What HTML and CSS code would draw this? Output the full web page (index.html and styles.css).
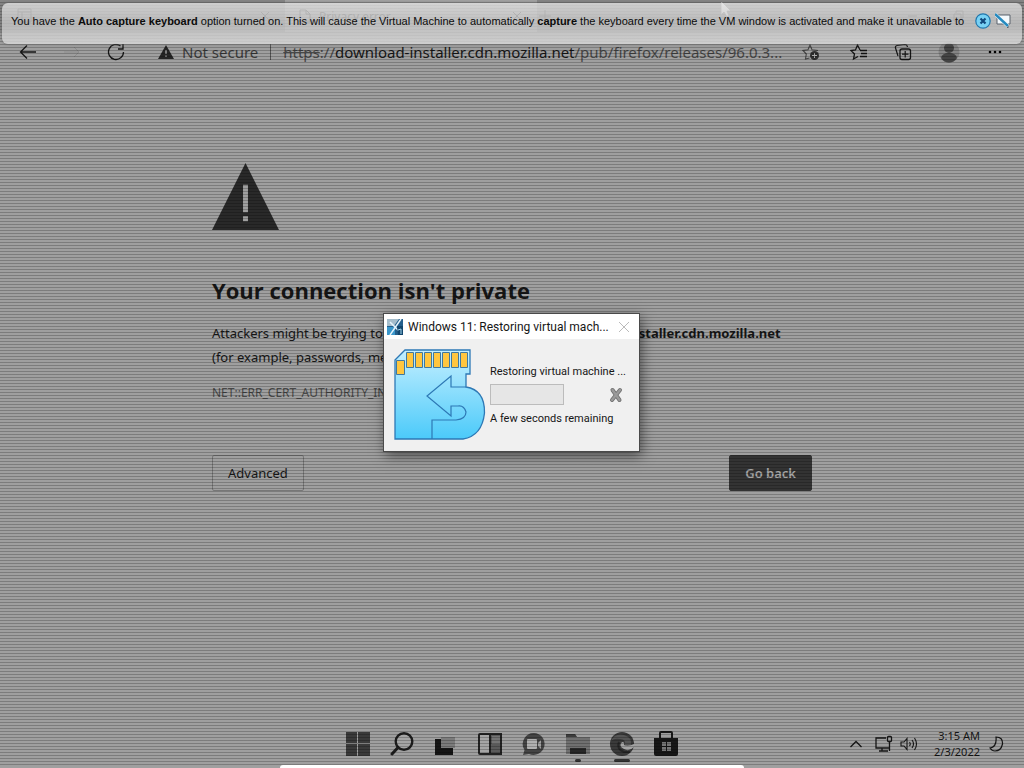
FILE: index.html
```html
<!DOCTYPE html>
<html lang="en">
<head>
<meta charset="utf-8">
<title>Windows 11 virtual machine</title>
<link rel="stylesheet" href="styles.css">
</head>
<body>
<div class="desktop">
  <div class="tabstrip">
    <svg class="tab-menu" width="16" height="16" viewBox="0 0 16 16"><path d="M1 1h13v13H1zM1 4h13M5 4v10" fill="none" stroke="currentColor"/></svg>
    <div class="tab">
      <svg class="tab-x" width="8" height="8" viewBox="0 0 8 8"><path d="M0 0l8 8M8 0L0 8" stroke="currentColor"/></svg>
    </div>
    <div class="tab tab-active">
      <svg width="12" height="14" viewBox="0 0 12 14"><path d="M1 1h6l4 4v8H1zM7 1v4h4" fill="none" stroke="currentColor"/></svg>
      <span>Privacy error</span>
      <svg class="tab-x" width="8" height="8" viewBox="0 0 8 8"><path d="M0 0l8 8M8 0L0 8" stroke="currentColor"/></svg>
    </div>
    <svg class="tab-plus" width="12" height="12" viewBox="0 0 12 12"><path d="M6 0v12M0 6h12" stroke="currentColor"/></svg>
    <svg class="window-buttons" width="56" height="12" viewBox="0 0 56 12"><path d="M0 6h9M46 4h7v7h-7zM48 3V1h7v7h-2" fill="none" stroke="currentColor"/></svg>
  </div>
  <nav class="toolbar">
    <button class="tool" aria-label="Back"><svg width="18" height="16" viewBox="0 0 18 16"><path d="M17 8H2M8 1.500L1.500 8L8 14.500" fill="none" stroke="currentColor" stroke-width="1.300"/></svg></button>
    <button class="tool faded" aria-label="Forward"><svg width="16" height="16" viewBox="0 0 16 16"><path d="M0 8h15M10 3l5 5l-5 5" fill="none" stroke="currentColor"/></svg></button>
    <button class="tool" aria-label="Refresh"><svg width="18" height="18" viewBox="0 0 18 18"><path d="M16.500 9A7.500 7.500 0 1 1 13.500 3M16 1v5h-5" fill="none" stroke="currentColor" stroke-width="1.300"/></svg></button>
    <div class="address">
      <svg width="16" height="14" viewBox="0 0 16 14"><path d="M8 0L16 14H0z" fill="#252525"/><path d="M8 5v4M8 10.500v1.500" stroke="#999" stroke-width="1.500"/></svg>
      <span class="secure">Not secure</span><span class="rule"></span>
      <span class="url"><s>https</s>://<b>download-installer.cdn.mozilla.net</b>/pub/firefox/releases/96.0.3...</span>
      <svg class="add-fav" width="18" height="18" viewBox="0 0 18 18"><path d="M7.500 15l-4 1l.8-5L1 7.500l5-.7L8 2l2 4.800l6 .7" fill="none" stroke="#444" stroke-width="1.100"/><circle cx="12.500" cy="12.500" r="4.500" fill="#303030"/><path d="M12.500 10v5M10 12.500h5" stroke="#aaa"/></svg>
    </div>
    <div class="tools">
      <button class="tool" aria-label="Favorites"><svg width="18" height="18" viewBox="0 0 18 18"><path d="M10 7L7.500 2L5.500 7L1 7.500L4.500 11L3.500 16L8 13.500M10 7.500h7M11 10.500h6M10 13.500h7" fill="none" stroke="currentColor" stroke-width="1.300"/></svg></button>
      <button class="tool" aria-label="Collections"><svg width="18" height="18" viewBox="0 0 18 18"><rect x="6" y="6" width="10.500" height="10.500" rx="2" fill="none" stroke="currentColor" stroke-width="1.300"/><path d="M11.200 8v6.500M8 11.200h6.500M4 13L1.500 5Q1 3 3 2.500L11 1.500Q13 1.500 13.500 4" fill="none" stroke="currentColor" stroke-width="1.200"/></svg></button>
      <button class="tool" aria-label="Profile"><svg width="22" height="22" viewBox="0 0 22 22"><circle cx="11" cy="11" r="10.500" fill="#858585"/><circle cx="11" cy="7" r="5" fill="#444"/><path d="M3 17Q4 12 11 12T19 17Q16 21.500 11 21.500T3 17z" fill="#444"/></svg></button>
      <button class="tool" aria-label="Settings and more"><svg width="16" height="16" viewBox="0 0 16 16"><circle cx="3" cy="8" r="1.300"/><circle cx="8" cy="8" r="1.300"/><circle cx="13" cy="8" r="1.300"/></svg></button>
    </div>
  </nav>

  <main class="page">
    <article class="warning">
      <svg class="warning-icon" width="67" height="67" viewBox="0 0 68 68"><path d="M34 0L68 68H0z" fill="#292929"/><path d="M34 22v28M34 54v5" stroke="#a0a0a0" stroke-width="5"/></svg>
      <h1>Your connection isn't private</h1>
      <p class="explain">Attackers might be trying to steal your information from <strong>download-installer.cdn.mozilla.net</strong><br>(for example, passwords, messages, or credit cards).</p>
      <p class="code">NET::ERR_CERT_AUTHORITY_INVALID</p>
      <div class="actions">
        <button class="btn">Advanced</button>
        <button class="btn btn-primary">Go back</button>
      </div>
    </article>
  </main>

  <footer class="taskbar">
    <div class="apps">
      <button class="app" aria-label="Start"><svg width="24" height="24" viewBox="0 0 24 24" fill="#3a3a3a"><path d="M0 0h11v11H0zM12 0h12v11H12zM0 12h11v12H0zM12 12h12v12H12z"/></svg></button>
      <button class="app" aria-label="Search"><svg width="24" height="24" viewBox="0 0 24 24"><circle cx="14" cy="9.500" r="8.300" fill="#a5a5a5" stroke="#1d1d1d" stroke-width="2.400"/><path d="M8 15.500L2 22" stroke="#1d1d1d" stroke-width="3" stroke-linecap="round"/></svg></button>
      <button class="app" aria-label="Task view"><svg width="24" height="24" viewBox="0 0 24 24"><path d="M7 5h14v11H7z" fill="#7c7c7c"/><path d="M1 7h6v9h12v7H1z" fill="#151515"/></svg></button>
      <button class="app" aria-label="Widgets"><svg width="24" height="24" viewBox="0 0 24 24"><rect x="1" y="2" width="22" height="20" rx="1" fill="#a5a5a5" stroke="#222" stroke-width="2"/><path d="M12 2h11v20H12z" fill="#5a5a5a" stroke="#222" stroke-width="2"/><path d="M14 4h8v8h-8z" fill="#747474"/></svg></button>
      <button class="app" aria-label="Chat"><svg width="24" height="24" viewBox="0 0 24 24"><path d="M12 1a11 11 0 1 1-5 21L1 23l1.500-5A11 11 0 0 1 12 1z" fill="#444"/><rect x="5" y="7" width="10" height="10" rx="1" fill="#b0b0b0"/><path d="M16 11l3-3v9l-3-3z" fill="#a0a0a0"/></svg></button>
      <button class="app running" aria-label="File Explorer"><svg width="24" height="24" viewBox="0 0 24 24"><path d="M0 2h9l2 3h13v17H0z" fill="#707070"/><path d="M0 2h9l2 3H0z" fill="#3c3c3c"/><path d="M4 16h16v6H4z" fill="#282828"/></svg></button>
      <button class="app running active" aria-label="Microsoft Edge"><svg width="24" height="24" viewBox="0 0 24 24"><circle cx="12" cy="12" r="12" fill="#3a3a3a"/><path d="M1 9Q5 1 14 3Q22 5 21 13Q17 17 15 13Q16 7 10 7Q4 6 1 9z" fill="#555"/><path d="M24 15Q19 20 14 17Q8 14 12 10Q15 10 14 13Q18 15 24 12z" fill="#a4a4a4"/><path d="M9 10Q6 17 14 20L20 20" fill="none" stroke="#262626" stroke-width="2"/></svg></button>
      <button class="app" aria-label="Microsoft Store"><svg width="24" height="26" viewBox="0 0 24 26"><path d="M6 8V2q0-1 1-1h10q1 0 1 1v6" fill="none" stroke="#191919" stroke-width="2"/><path d="M0 7h24v16q0 2-2 2H2q-2 0-2-2z" fill="#171717"/><path d="M8 11h4v4H8zM13 11h4v4h-4zM8 16h4v4H8zM13 16h4v4h-4z" fill="#757575"/></svg></button>
    </div>
    <div class="tray">
      <svg width="14" height="10" viewBox="0 0 14 10"><path d="M1.500 8L7 2.500L12.500 8" fill="none" stroke="currentColor" stroke-width="1.300"/></svg>
      <svg class="net" width="18" height="18" viewBox="0 0 18 18"><path d="M11 3H1v10h13M4 16h9M7 13v3M14.500 7v9" fill="none" stroke="currentColor" stroke-width="1.300"/><rect x="12.500" y="1.500" width="4" height="5" rx="1" fill="none" stroke="currentColor" stroke-width="1.300"/></svg>
      <svg class="sound" width="18" height="14" viewBox="0 0 18 14"><path d="M1 5h3l3-3.500v11L4 9H1zM9.500 5q1.500 2 0 4M12 3q3 4 0 8M14.500 1q4 6 0 12" fill="none" stroke="currentColor" stroke-width="1.100"/></svg>
      <div class="clock"><time>3:15 AM</time><time>2/3/2022</time></div>
      <svg width="15" height="16" viewBox="0 0 15 16"><path d="M7 1Q14 1 13.500 8Q12 15 6 15Q3 15 1 12Q8 11 7 1z" fill="none" stroke="currentColor" stroke-width="1.200"/></svg>
    </div>
  </footer>
  <div class="bottom-edge"></div>
</div>

<svg class="cursor" width="12" height="18" viewBox="0 0 12 18"><path d="M1 1v14l3-3l3 5l2-1l-2-5h4z" fill="#eee" stroke="#777" stroke-width=".8"/></svg>
<aside class="notice">
  <p>You have the <b>Auto capture keyboard</b> option turned on. This will cause the Virtual Machine to automatically <b>capture</b> the keyboard every time the VM window is activated and make it unavailable to</p>
  <button aria-label="Close message"><svg width="16" height="16" viewBox="0 0 16 16"><circle cx="8" cy="8" r="7.200" fill="#78d1f4" stroke="#2077ad" stroke-width="1.200"/><path d="M5.500 5.500l5 5M10.500 5.500l-5 5" stroke="#10497d" stroke-width="2.200"/></svg></button>
  <button aria-label="Do not show again"><svg width="16" height="16" viewBox="0 0 16 16"><path d="M2 2h13v9H13v4l-4-4H2z" fill="#f4f9fc" stroke="#5a626c"/><path d="M0 1l13 12" stroke="#f4f9fc" stroke-width="3.500"/><path d="M0 1l13 12" stroke="#268abf" stroke-width="2.400"/></svg></button>
</aside>

<section class="dialog" role="dialog" aria-labelledby="dialog-title">
  <header class="dialog-head">
    <svg width="16" height="16" viewBox="0 0 16 16"><path d="M0 0h16v16H0z" fill="#235f8c"/><path d="M0 0h12L7 7H0z" fill="#a5bdcb"/><path d="M0 8h8v8H0z" fill="#3a97cb"/><path d="M14 0L3 16M3 3l11 11" stroke="#e6f4fb" stroke-width="1.500"/><path d="M10 7h6v9h-5z" fill="#12466d"/><path d="M11 11l3-1v5" fill="none" stroke="#a3d7ef"/></svg>
    <h2 id="dialog-title">Windows 11: Restoring virtual mach...</h2>
    <button aria-label="Close"><svg width="12" height="12" viewBox="0 0 12 12"><path d="M1 1l10 10M11 1L1 11" stroke="#bbb"/></svg></button>
  </header>
  <div class="dialog-body">
    <svg width="92" height="92" viewBox="0 0 92 92">
      <defs><linearGradient id="card" x1="0" y1="0" x2="0" y2="1"><stop offset="0" stop-color="#c4efff"/><stop offset="1" stop-color="#4bcafa"/></linearGradient></defs>
      <path d="M1 11L11 1H76V25H72V38Q91 41 90.500 64Q88 87 69 90H1z" fill="url(#card)" stroke="#2d78b5" stroke-width="1.300"/>
      <path d="M38 90V71H62Q72 70 72 63Q70 56 64 57H57V67L33 47L57 27V38H72" fill="none" stroke="#2d78b5" stroke-width="1.200"/>
      <g fill="#ffc63f" stroke="#3f78a0"><path d="M2.500 11.500h8v14h-8zM12.500 3.500h7v15h-7zM21.500 3.500h7v15h-7zM30.500 3.500h7v15h-7zM39.500 3.500h7v15h-7zM48.500 3.500h7v15h-7zM57.500 3.500h7v15h-7zM66.500 3.500h7v15h-7z"/></g>
    </svg>
    <div class="status">
      <p>Restoring virtual machine ...</p>
      <div class="progress-row">
        <div class="progress" role="progressbar" aria-label="Restoring virtual machine"></div>
        <button aria-label="Cancel"><svg width="14" height="16" viewBox="0 0 14 16"><path d="M3.500 3l7 10M11 3L3 13" stroke="#707070" stroke-width="4" stroke-linecap="round"/><path d="M3.500 3l7 10M11 3L3 13" stroke="#9a9a9a" stroke-width="2.300" stroke-linecap="round"/></svg></button>
      </div>
      <p>A few seconds remaining</p>
    </div>
  </div>
</section>
</body>
</html>
```
FILE: styles.css
```css
* { box-sizing: border-box; }
body, h1, h2, p { margin: 0; }
body {
  position: relative;
  min-height: 100vh;
  background: #9f9f9f;
  color: #161616;
  font-family: "Noto Sans", "Open Sans", sans-serif;
}
button {
  padding: 0;
  border: 0;
  background: none;
  color: inherit;
  font: inherit;
}
svg { display: block; flex: none; }

.desktop {
  position: relative;
  display: flex;
  flex-direction: column;
  min-height: 100vh;
}
.desktop::after {
  content: "";
  position: absolute;
  inset: 0 0 3px;
  background: repeating-linear-gradient(transparent 0 2px, rgba(0, 0, 0, .22) 2px 3px);
  pointer-events: none;
}

.tabstrip {
  display: flex;
  align-items: center;
  height: 32px;
  padding-left: 17px;
  background: #858585;
  color: #333;
  font-size: 12px;
}
.tab {
  display: flex;
  align-items: center;
  gap: 8px;
  width: 252px;
  height: 32px;
  padding: 0 16px 0 14px;
}
.tab-active { background: #a2a2a2; }
.tab-x { margin-left: auto; }
.tab-plus { margin-left: 2px; }
.window-buttons { margin: 0 60px 0 auto; }

.toolbar {
  display: flex;
  align-items: center;
  height: 40px;
  padding: 0 20px 0 19px;
  gap: 26px;
}
.tool { display: grid; place-items: center; min-width: 18px; }
.faded { opacity: .12; }
.address {
  display: flex;
  flex: 1;
  align-items: center;
  min-width: 0;
  padding-left: 7px;
  font-size: 15px;
  white-space: nowrap;
}
.secure { margin-left: 8px; color: #3c3c3c; }
.rule { width: 1px; height: 16px; margin: 0 12px; background: #555; }
.url { color: #484848; }
.url b { font-weight: 400; color: #181818; }
.add-fav { margin-left: auto; }
.tools { display: flex; align-items: center; gap: 26px; padding-left: 4px; }

.page { flex: 1; padding: 91px 32px 32px; }
.warning { max-width: 600px; margin: 0 auto; }
h1 {
  margin-top: 42px;
  font: 700 22px/36px "Open Sans", "Noto Sans", sans-serif;
}
.explain { margin-top: 13px; font-size: 13px; line-height: 24px; white-space: nowrap; }
.code { margin-top: 12px; font-size: 12px; line-height: 24px; color: #484848; }
.actions { display: flex; justify-content: space-between; margin-top: 50px; }
.btn {
  height: 36px;
  padding: 0 15px;
  border: 1px solid #777;
  border-radius: 2px;
  font-size: 13px;
}
.btn-primary {
  border-color: #333;
  background: #333;
  color: #a5a5a5;
  font-weight: 600;
}

.taskbar {
  display: grid;
  grid-template-columns: 1fr auto 1fr;
  align-items: center;
  height: 43px;
}
.apps { grid-column: 2; display: flex; gap: 20px; }
.app { position: relative; display: grid; place-items: center; width: 24px; height: 32px; }
.running::after {
  content: "";
  position: absolute;
  bottom: -2px;
  left: 9px;
  width: 6px;
  height: 3px;
  border-radius: 2px;
  background: #333;
}
.active::after { left: 4px; width: 16px; }
.tray { display: flex; justify-content: flex-end; align-items: center; padding-right: 20px; }
.net { margin-left: 12px; }
.sound { margin: 0 16px 0 7px; }
.clock { display: grid; margin-right: 9px; font-size: 11px; line-height: 16px; text-align: right; }
.bottom-edge {
  height: 3px;
  margin: 0 280px;
  border-radius: 8px 8px 0 0;
  background: #fff;
}

.notice {
  position: absolute;
  top: 3px;
  left: 2px;
  right: 2px;
  display: flex;
  align-items: center;
  height: 41px;
  padding: 0 11px 6px 9px;
  gap: 4px;
  border-radius: 6px;
  background: linear-gradient(rgba(225, 225, 225, .8), rgba(196, 196, 196, .8) 50%, rgba(218, 218, 218, .8));
  box-shadow: 0 0 3px #666;
  color: #0b0b0b;
  font: 11px/16px "Liberation Sans", Arial, sans-serif;
}
.notice p { flex: 1; white-space: nowrap; }
.cursor { position: absolute; top: 0; left: 720px; }

.dialog {
  position: absolute;
  top: 313px;
  left: calc(50% - 129px);
  width: 257px;
  border: 1px solid #4a4a4a;
  background: #f0f0f0;
  box-shadow: 2px 4px 12px rgba(0, 0, 0, .5);
  color: #161616;
  font: 11px/16px Roboto, "Liberation Sans", sans-serif;
}
.dialog-head {
  display: flex;
  align-items: center;
  gap: 5px;
  height: 25px;
  padding: 0 9px 0 3px;
  background: #fff;
}
.dialog-head h2 {
  flex: 1;
  font-size: 12px;
  font-weight: 400;
  white-space: nowrap;
}
.dialog-body { display: flex; gap: 4px; padding: 10px 12px 10px 10px; }
.status { flex: 1; padding-top: 15px; white-space: nowrap; }
.progress-row { display: flex; align-items: center; justify-content: space-between; margin: 4px 4px 6px 0; }
.progress { width: 74px; height: 21px; border: 1px solid #bcbcbc; background: #e6e6e6; }
```
